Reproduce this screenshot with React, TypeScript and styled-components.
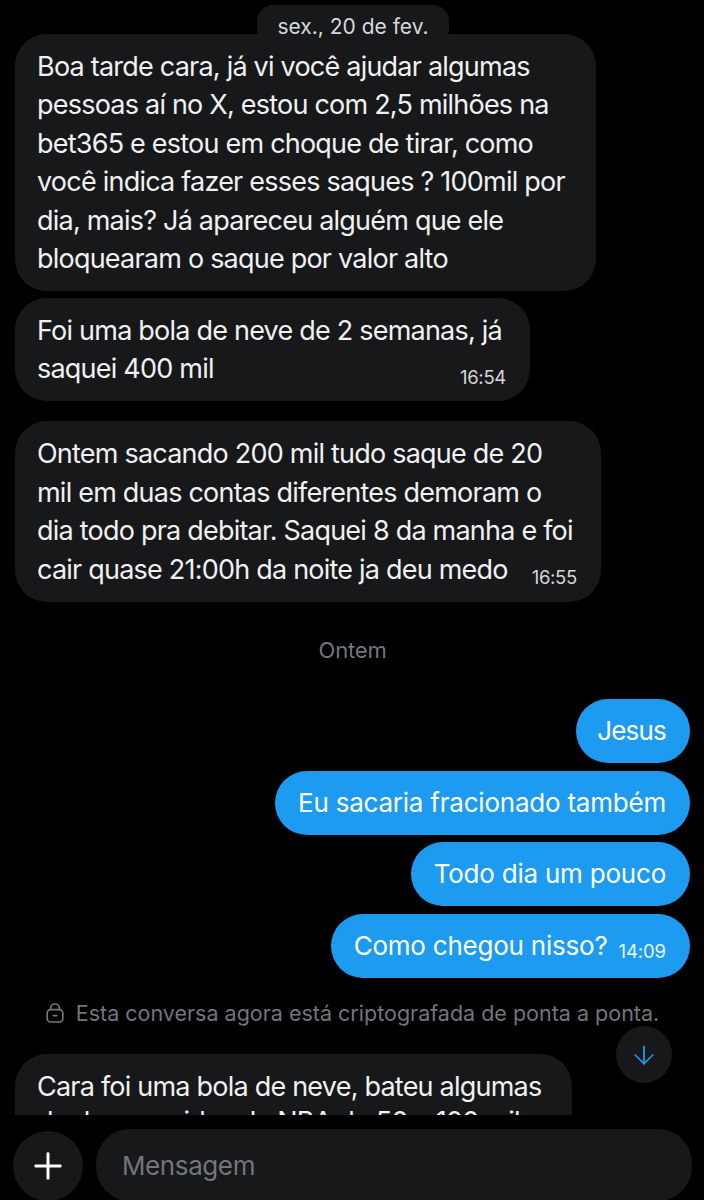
import React from "react";
import styled, { createGlobalStyle } from "styled-components";
import { ArrowDown, Plus } from "lucide-react";

const GlobalStyle = createGlobalStyle`
  html, body {
    margin: 0;
    padding: 0;
    background: #000;
  }
  body {
    font-family: Inter, "Liberation Sans", sans-serif;
  }
`;

const Screen = styled.div`
  position: relative;
  width: 704px;
  height: 1200px;
  background: #000;
  overflow: hidden;
  display: flex;
  flex-direction: column;
`;

const Thread = styled.div`
  height: 1115px;
  overflow: hidden;
  padding: 5px 14px 0 15px;
  box-sizing: border-box;
  display: flex;
  flex-direction: column;
`;

const DatePill = styled.div`
  position: relative;
  z-index: 1;
  align-self: center;
  margin-left: 1px;
  height: 40px;
  width: 192px;
  margin-bottom: -11px;
  border-radius: 16px;
  background: #17181a;
  color: #d6d9db;
  font-size: 21px;
  line-height: 43px;
  text-align: center;
  box-sizing: border-box;
`;

const Bubble = styled.div<{ $width: number; $gap?: number }>`
  position: relative;
  width: ${({ $width }) => $width}px;
  margin-top: ${({ $gap }) => $gap ?? 0}px;
  box-sizing: border-box;
  padding: 14px 20px 12.6px 22px;
  background: #17181a;
  border-radius: 32px;
  color: #eff1f2;
  font-size: 27px;
  line-height: 38.4px;
  letter-spacing: -0.78px;
  white-space: nowrap;
  flex-shrink: 0;
`;

const LastLine = styled.div`
  display: flex;
  justify-content: space-between;
  align-items: flex-end;
  padding-right: 4px;
`;

const ClippedLine = styled.div`
  margin-top: -3px;
`;

const Time = styled.span`
  font-size: 18.5px;
  line-height: 31px;
  letter-spacing: -0.3px;
  margin-bottom: -4px;
  color: #d4d6d8;
`;

const DayLabel = styled.div`
  margin-top: 33px;
  height: 30px;
  text-align: center;
  color: #71767b;
  font-size: 22px;
  line-height: 30px;
  letter-spacing: -0.2px;
`;

const Sent = styled.div<{ $gap: number; $tracking?: number; $inset?: number }>`
  align-self: flex-end;
  height: 64px;
  margin-top: ${({ $gap }) => $gap}px;
  padding: 0 24px 0 ${({ $inset }) => $inset ?? 23}px;
  display: flex;
  align-items: center;
  gap: 11px;
  border-radius: 32px;
  background: #1d9bf0;
  color: #fff;
  font-size: 26px;
  letter-spacing: ${({ $tracking }) => $tracking ?? -0.22}px;
  flex-shrink: 0;
`;

const SentTime = styled.span`
  font-size: 18.5px;
  letter-spacing: -0.1px;
  color: #e8f5fe;
  margin-top: 11px;
`;

const Notice = styled.div`
  margin-top: 20px;
  height: 30px;
  display: flex;
  align-items: center;
  justify-content: center;
  gap: 12px;
  color: #71767b;
  font-size: 21.5px;
  flex-shrink: 0;
`;

const ScrollButton = styled.div`
  position: absolute;
  left: 616px;
  top: 1026px;
  width: 56px;
  height: 57px;
  border-radius: 50%;
  background: #17181a;
  display: flex;
  align-items: center;
  justify-content: center;
  color: #1d9bf0;
`;

const Composer = styled.div`
  display: flex;
  gap: 13px;
  padding: 14px 12px 0 13px;
  height: 85px;
  box-sizing: border-box;
`;

const AddButton = styled.div`
  width: 70px;
  height: 70px;
  margin-top: 2px;
  border-radius: 50%;
  background: #17181a;
  color: #fff;
  flex-shrink: 0;
  display: flex;
  align-items: center;
  justify-content: center;
`;

const MessageInput = styled.div`
  flex: 1;
  height: 72px;
  padding-left: 26px;
  border-radius: 34px;
  background: #17181a;
  color: #71767b;
  font-size: 26px;
  letter-spacing: -0.4px;
  line-height: 74px;
`;

function LockIcon() {
  return (
    <svg width="18" height="20" viewBox="0 0 18 20" fill="none" stroke="currentColor" strokeWidth="1.7" strokeLinecap="round">
      <rect x="1.2" y="6.6" width="15.6" height="12.4" rx="3.4" />
      <path d="M4.6 6.6V5.2a4.4 4.2 0 0 1 8.8 0v1.4" />
      <path d="M7.2 12.6h3.6" />
    </svg>
  );
}

export default function App() {
  return (
    <Screen>
      <GlobalStyle />
      <Thread>
        <DatePill>sex., 20 de fev.</DatePill>
        <Bubble $width={581}>
          Boa tarde cara, já vi você ajudar algumas
          <br />
          pessoas aí no X, estou com 2,5 milhões na
          <br />
          bet365 e estou em choque de tirar, como
          <br />
          você indica fazer esses saques ? 100mil por
          <br />
          dia, mais? Já apareceu alguém que ele
          <br />
          bloquearam o saque por valor alto
        </Bubble>
        <Bubble $width={515} $gap={7}>
          Foi uma bola de neve de 2 semanas, já
          <LastLine>
            <span>saquei 400 mil</span>
            <Time>16:54</Time>
          </LastLine>
        </Bubble>
        <Bubble $width={586} $gap={20}>
          Ontem sacando 200 mil tudo saque de 20
          <br />
          mil em duas contas diferentes demoram o
          <br />
          dia todo pra debitar. Saquei 8 da manha e foi
          <LastLine>
            <span>cair quase 21:00h da noite ja deu medo</span>
            <Time>16:55</Time>
          </LastLine>
        </Bubble>
        <DayLabel>Ontem</DayLabel>
        <Sent $gap={34} $tracking={-0.8} $inset={21}>
          Jesus
        </Sent>
        <Sent $gap={8}>Eu sacaria fracionado também</Sent>
        <Sent $gap={7}>Todo dia um pouco</Sent>
        <Sent $gap={8}>
          Como chegou nisso?
          <SentTime>14:09</SentTime>
        </Sent>
        <Notice>
          <LockIcon />
          Esta conversa agora está criptografada de ponta a ponta.
        </Notice>
        <Bubble $width={557} $gap={26}>
          Cara foi uma bola de neve, bateu algumas
          <ClippedLine>duplas seguidas de NBA de 50 a 100 mil</ClippedLine>
        </Bubble>
      </Thread>
      <ScrollButton>
        <ArrowDown size={30} strokeWidth={1.4} />
      </ScrollButton>
      <Composer>
        <AddButton>
          <Plus size={42} strokeWidth={1.7} />
        </AddButton>
        <MessageInput>Mensagem</MessageInput>
      </Composer>
    </Screen>
  );
}
